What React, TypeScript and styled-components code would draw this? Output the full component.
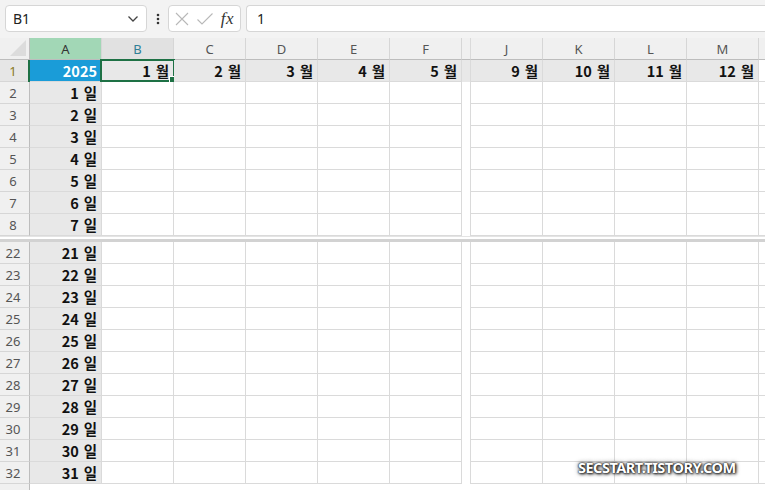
import React from 'react';
import styled, { createGlobalStyle, css } from 'styled-components';

const GRID = '30px repeat(6, 72px) 9px repeat(4, 72px) 1fr';
const LINE = '#dadada';
const HEAD_BG = '#f0f0f0';
const HEAD_LINE = '#bdbdbd';
const FILL = '#e8e8e8';
const GREEN = '#1e7145';
const CELL_FONT = '"Noto Sans CJK KR", "Noto Sans", sans-serif';

const Global = createGlobalStyle`
  html, body { margin: 0; padding: 0; background: #fff; overflow: hidden; }
  * { box-sizing: border-box; }
`;

const Page = styled.div`
  width: 765px;
  height: 490px;
  position: relative;
  overflow: hidden;
  background: #fff;
  font-family: "Noto Sans", "Liberation Sans", sans-serif;
`;

const FormulaBar = styled.div`
  height: 38px;
  background: #f3f3f3;
  display: flex;
  align-items: flex-start;
  padding: 5px 0 0 5px;
`;

const Box = styled.div`
  height: 27px;
  background: #fff;
  border: 1px solid #d6d6d6;
  border-radius: 4px;
  display: flex;
  align-items: center;
`;

const NameBox = styled(Box)`
  width: 142px;
  justify-content: space-between;
  padding: 0 7px 0 7px;
  font-size: 14px;
  color: #222;
`;

const Kebab = styled.div`
  width: 21px;
  height: 27px;
  display: flex;
  align-items: center;
  justify-content: center;
`;

const FxBox = styled(Box)`
  width: 73px;
  padding: 0 4px 0 5px;
  justify-content: space-between;
`;

const Fx = styled.span`
  font-family: "Liberation Serif", serif;
  font-style: italic;
  font-size: 17px;
  color: #333;
  padding-right: 2px;
  letter-spacing: 0.5px;
`;

const FormulaInput = styled(Box)`
  flex: 1;
  margin-left: 5px;
  border-right: none;
  border-radius: 4px 0 0 4px;
  padding-left: 10px;
  font-size: 14px;
  color: #222;
`;

const Sheet = styled.div`
  display: flex;
  flex-direction: column;
`;

const Row = styled.div<{ $h?: number }>`
  display: grid;
  grid-template-columns: ${GRID};
  grid-template-rows: ${(p) => p.$h ?? 22}px;
  height: ${(p) => p.$h ?? 22}px;
  line-height: 20px;
`;

const Corner = styled.div`
  background: ${HEAD_BG};
  border-right: 1px solid ${HEAD_LINE};
  border-bottom: 1px solid ${HEAD_LINE};
  position: relative;
  &::after {
    content: '';
    position: absolute;
    right: 3px;
    bottom: 3px;
    width: 0;
    height: 0;
    border-left: 16px solid transparent;
    border-bottom: 16px solid #dcdcdc;
  }
`;

const ColHead = styled.div<{ $mode?: 'sel' | 'active' | 'none' }>`
  background: ${HEAD_BG};
  border-right: 1px solid #d6d6d6;
  border-bottom: 1px solid ${HEAD_LINE};
  display: flex;
  align-items: center;
  justify-content: center;
  font-size: 13px;
  color: #555;
  ${(p) =>
    p.$mode === 'sel' &&
    css`
      background: #a2d7b6;
      color: #333;
    `}
  ${(p) =>
    p.$mode === 'active' &&
    css`
      background: #e1e1e1;
      color: #2f7f96;
    `}
`;

const RowHead = styled.div<{ $active?: boolean }>`
  background: ${(p) => (p.$active ? '#e6e6e6' : HEAD_BG)};
  border-right: 1px solid ${HEAD_LINE};
  border-bottom: 1px solid #d6d6d6;
  display: flex;
  align-items: center;
  justify-content: center;
  padding-right: 3px;
  font-size: 13px;
  color: ${(p) => (p.$active ? '#8a7a1e' : '#555')};
  position: relative;
  ${(p) =>
    p.$active &&
    css`
      &::after {
        content: '';
        position: absolute;
        right: -1px;
        top: 0;
        bottom: -1px;
        width: 2px;
        background: ${GREEN};
      }
    `}
`;

const Cell = styled.div<{ $fill?: string; $color?: string }>`
  background: ${(p) => p.$fill ?? '#fff'};
  border-right: 1px solid ${LINE};
  border-bottom: 1px solid ${LINE};
  display: flex;
  align-items: center;
  justify-content: flex-end;
  padding: 1px 4px 0 0;
  font-family: ${CELL_FONT};
  font-weight: 700;
  font-size: 14.5px;
  word-spacing: 1.5px;
  color: ${(p) => p.$color ?? '#111'};
  white-space: pre;
  position: relative;
  overflow: visible;
`;

const Selected = styled.div`
  position: absolute;
  left: -2px;
  top: -1px;
  right: -2px;
  bottom: -1px;
  border: 2px solid ${GREEN};
  pointer-events: none;
  &::after {
    content: '';
    position: absolute;
    right: -5px;
    bottom: -5px;
    width: 7px;
    height: 7px;
    background: ${GREEN};
    border: 1px solid #fff;
  }
`;

const Gap = styled.div<{ $fill?: string; $head?: boolean }>`
  background: ${(p) => p.$fill ?? '#fff'};
  border-right: 1px solid ${LINE};
  ${(p) => p.$head && css`border-bottom: 1px solid ${HEAD_LINE};`}
`;

const Rest = styled.div<{ $head?: boolean }>`
  background: ${(p) => (p.$head ? HEAD_BG : '#fff')};
  border-bottom: 1px solid ${(p) => (p.$head ? HEAD_LINE : LINE)};
`;

const SplitBar = styled.div`
  height: 6px;
  background: #fff;
  border-top: 1px solid #e4e4e4;
  border-bottom: 3px solid #d2d2d2;
`;

const Filler = styled.div`
  height: 8px;
  display: grid;
  grid-template-columns: ${GRID};
`;

const FillerHead = styled.div`
  background: ${HEAD_BG};
  border-right: 1px solid ${HEAD_LINE};
`;

const Watermark = styled.div`
  position: absolute;
  left: 578px;
  top: 457px;
  font-family: "Noto Sans", sans-serif;
  font-weight: 700;
  font-size: 14.5px;
  letter-spacing: -0.5px;
  color: #fff;
  text-shadow: 0 0 1px #222, 0 0 2px #222, 1px 1px 3px #111, 0 0 5px #444;
`;

const LEFT = ['B', 'C', 'D', 'E', 'F'];
const RIGHT = ['J', 'K', 'L', 'M'];
const LEFT_MONTHS = [1, 2, 3, 4, 5];
const RIGHT_MONTHS = [9, 10, 11, 12];
const TOP_ROWS = [2, 3, 4, 5, 6, 7, 8];
const BOTTOM_ROWS = [22, 23, 24, 25, 26, 27, 28, 29, 30, 31, 32];

const Chevron = () => (
  <svg width="12" height="8" viewBox="0 0 12 8">
    <path d="M1.5 1.5 L6 6 L10.5 1.5" fill="none" stroke="#444" strokeWidth="1.3" />
  </svg>
);

const Dots = () => (
  <svg width="4" height="12" viewBox="0 0 4 12">
    <circle cx="2" cy="2" r="1.3" fill="#333" />
    <circle cx="2" cy="6" r="1.3" fill="#333" />
    <circle cx="2" cy="10" r="1.3" fill="#333" />
  </svg>
);

const Cross = () => (
  <svg width="16" height="16" viewBox="0 0 16 16">
    <path d="M2 2 L14 14 M14 2 L2 14" stroke="#b8b8b8" strokeWidth="1.1" fill="none" />
  </svg>
);

const Check = () => (
  <svg width="18" height="16" viewBox="0 0 18 16">
    <path d="M1.5 8.5 L6 13 L16.5 2.5" stroke="#b8b8b8" strokeWidth="1.1" fill="none" />
  </svg>
);

const DataRow = ({ n }: { n: number }) => (
  <Row>
    <RowHead>{n}</RowHead>
    <Cell $fill={FILL}>{`${n - 1} 일`}</Cell>
    {LEFT.map((c) => (
      <Cell key={c} />
    ))}
    <Gap />
    {RIGHT.map((c) => (
      <Cell key={c} />
    ))}
    <Rest />
  </Row>
);

export default function App() {
  return (
    <Page>
      <Global />
      <FormulaBar>
        <NameBox>
          <span>B1</span>
          <Chevron />
        </NameBox>
        <Kebab>
          <Dots />
        </Kebab>
        <FxBox>
          <Cross />
          <Check />
          <Fx>fx</Fx>
        </FxBox>
        <FormulaInput>1</FormulaInput>
      </FormulaBar>
      <Sheet>
        <Row>
          <Corner />
          <ColHead $mode="sel">A</ColHead>
          {LEFT.map((c) => (
            <ColHead key={c} $mode={c === 'B' ? 'active' : 'none'}>
              {c}
            </ColHead>
          ))}
          <Gap $fill={HEAD_BG} $head />
          {RIGHT.map((c) => (
            <ColHead key={c}>{c}</ColHead>
          ))}
          <Rest $head />
        </Row>
        <Row>
          <RowHead $active>1</RowHead>
          <Cell $fill="#1a9cd8" $color="#fff">
            2025
          </Cell>
          {LEFT_MONTHS.map((m) => (
            <Cell key={m} $fill={FILL}>
              {`${m} 월`}
              {m === 1 && <Selected />}
            </Cell>
          ))}
          <Gap $fill={FILL} />
          {RIGHT_MONTHS.map((m) => (
            <Cell key={m} $fill={FILL}>{`${m} 월`}</Cell>
          ))}
          <Rest />
        </Row>
        {TOP_ROWS.map((n) => (
          <DataRow key={n} n={n} />
        ))}
        <SplitBar />
        {BOTTOM_ROWS.map((n) => (
          <DataRow key={n} n={n} />
        ))}
        <Filler>
          <FillerHead />
        </Filler>
      </Sheet>
      <Watermark>SECSTART.TISTORY.COM</Watermark>
    </Page>
  );
}
